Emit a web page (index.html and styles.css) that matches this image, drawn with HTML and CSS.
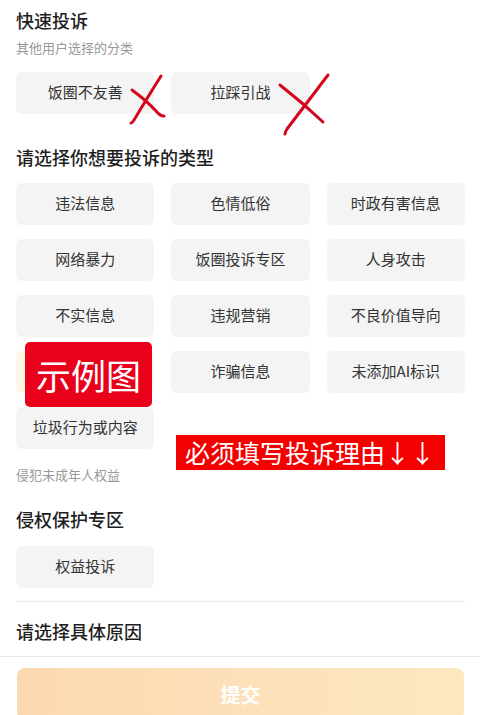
FILE: index.html
```html
<!DOCTYPE html>
<html lang="zh-CN">
<head>
<meta charset="utf-8">
<title>投诉</title>
<link rel="stylesheet" href="styles.css">
</head>
<body>
<div class="page">
  <div class="content">
    <h2 class="title">快速投诉</h2>
    <p class="sub sub-quick">其他用户选择的分类</p>
    <div class="chips chips-quick">
      <div class="chip">饭圈不友善</div>
      <div class="chip">拉踩引战</div>
    </div>

    <h2 class="title title-types">请选择你想要投诉的类型</h2>
    <div class="chips chips-types">
      <div class="chip">违法信息</div>
      <div class="chip">色情低俗</div>
      <div class="chip">时政有害信息</div>
      <div class="chip">网络暴力</div>
      <div class="chip">饭圈投诉专区</div>
      <div class="chip">人身攻击</div>
      <div class="chip">不实信息</div>
      <div class="chip">违规营销</div>
      <div class="chip">不良价值导向</div>
      <div class="chip chip-selected"></div>
      <div class="chip">诈骗信息</div>
      <div class="chip">未添加AI标识</div>
      <div class="chip">垃圾行为或内容</div>
    </div>
    <p class="sub sub-minor">侵犯未成年人权益</p>

    <h2 class="title title-rights">侵权保护专区</h2>
    <div class="chips chips-rights">
      <div class="chip">权益投诉</div>
    </div>
    <div class="divider"></div>
    <h2 class="title title-reason">请选择具体原因</h2>
  </div>
  <div class="footer">
    <button class="submit" type="button">提交</button>
  </div>

  <div class="sample-label">示例图</div>
  <div class="notice">必须填写投诉理由↓↓</div>

  <svg class="marks" width="480" height="715" viewBox="0 0 480 715" aria-hidden="true">
    <path d="M161 76 Q149 95 134 120 Q132 123 131 123" />
    <path d="M132 90 Q147 101 156 111 Q160 116 164 116" />
    <path d="M328 75 Q306 104 287 129 Q285 132 285 134" />
    <path d="M280 85 Q303 103 323 122" />
  </svg>
</div>
</body>
</html>
```

FILE: styles.css
```css
* {
  box-sizing: border-box;
}

html, body {
  margin: 0;
  padding: 0;
  background: #ffffff;
}

body {
  font-family: "Noto Sans CJK SC", "Noto Sans", "Liberation Sans", sans-serif;
  color: #222222;
}

.page {
  position: relative;
  width: 480px;
  height: 715px;
  overflow: hidden;
}

.content {
  padding: 8px 15px 0 16px;
}

.title {
  margin: 0;
  font-size: 18px;
  line-height: 24px;
  font-weight: 500;
  color: #1f1f1f;
}

.sub {
  margin: 0;
  font-size: 13px;
  line-height: 18px;
  color: #999999;
}

.sub-quick {
  margin-top: 7px;
}

.chips {
  display: grid;
  grid-template-columns: repeat(3, 1fr);
  column-gap: 17px;
  row-gap: 14px;
}

.chips-quick {
  margin-top: 15px;
}

.chip {
  height: 42px;
  border-radius: 6px;
  background: #f4f4f4;
  color: #333333;
  font-size: 15px;
  line-height: 20px;
  padding-bottom: 2px;
  display: flex;
  align-items: center;
  justify-content: center;
  white-space: nowrap;
}

.chip-selected {
  background: #fff4e8;
}

.title-types {
  margin-top: 31px;
}

.chips-types {
  margin-top: 14px;
}

.sub-minor {
  margin-top: 17px;
}

.title-rights {
  margin-top: 23px;
}

.chips-rights {
  margin-top: 15px;
}

.divider {
  margin-top: 13px;
  height: 1px;
  background: #ececec;
}

.title-reason {
  margin-top: 17px;
}

.footer {
  margin-top: 13px;
  border-top: 1px solid #e8e8e8;
  padding: 11px 16px 0 17px;
}

.submit {
  display: block;
  width: 447px;
  height: 52px;
  border: 0;
  border-radius: 8px;
  background: linear-gradient(90deg, #fcd8b1 0%, #fce1ba 55%, #fde8c0 100%);
  color: #ffffff;
  font-family: inherit;
  font-size: 20px;
  font-weight: 700;
  padding: 0;
}

.sample-label {
  position: absolute;
  left: 25px;
  top: 342px;
  width: 127px;
  height: 65px;
  border-radius: 5px;
  background: #e9001b;
  color: #ffffff;
  font-size: 35px;
  line-height: 65px;
  text-align: center;
}

.notice {
  position: absolute;
  left: 176px;
  top: 435px;
  width: 269px;
  height: 35px;
  background: #f50000;
  color: #ffffff;
  font-size: 25px;
  line-height: 35px;
  padding-left: 9px;
  white-space: nowrap;
}

.marks {
  position: absolute;
  left: 0;
  top: 0;
  pointer-events: none;
}

.marks path {
  fill: none;
  stroke: #d4061c;
  stroke-width: 3;
  stroke-linecap: round;
  stroke-linejoin: round;
}
```
